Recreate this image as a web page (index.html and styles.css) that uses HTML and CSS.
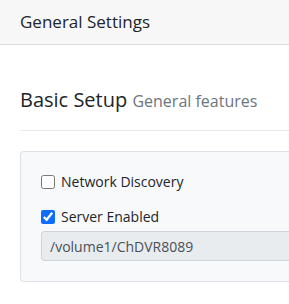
FILE: index.html
```html
<!DOCTYPE html>
<html lang="en">
<head>
  <meta charset="UTF-8" />
  <meta name="viewport" content="width=device-width, initial-scale=1.0" />
  <title>General Settings</title>
  <link rel="stylesheet" href="styles.css">
</head>
<body>
  <div class="page-header">General Settings</div>

  <div class="content">
    <h4 class="section-title">Basic Setup <small>General features</small></h4>
    <hr />

    <div class="card">
      <label class="check">
        <input type="checkbox" />
        <span>Network Discovery</span>
      </label>
      <label class="check">
        <input type="checkbox" checked />
        <span>Server Enabled</span>
      </label>
      <input type="text" class="path-input" value="/volume1/ChDVR8089" readonly />
    </div>
  </div>
</body>
</html>
```

FILE: styles.css
```css
:root {
  --text-color: #212529;
  --muted: #6c757d;
  --border-color: #dee2e6;
  --card-bg: #f8f9fa;
  --accent: #0d6efd;
}

body {
  margin: 0;
  font-family: 'Open Sans', 'Noto Sans', sans-serif;
  color: var(--text-color);
  background: #fff;
}

.page-header {
  background: #f7f7f7;
  border-bottom: 1px solid #dfdfdf;
  height: 44px;
  line-height: 43px;
  padding: 0 20px;
  font-size: 17px;
}

.content {
  padding: 0 0 0 20px;
}

.section-title {
  margin: 42px 0 0;
  font-size: 20px;
  font-weight: normal;
  line-height: 26px;
}

.section-title small {
  font-size: 16px;
  color: var(--muted);
}

hr {
  border: 0;
  border-top: 1px solid #e9ecef;
  margin: 16px 0 20px;
}

.card {
  background: var(--card-bg);
  border: 1px solid var(--border-color);
  border-right: 0;
  border-radius: 4px 0 0 4px;
  padding: 20px 0 20px 20px;
}

.check {
  display: flex;
  align-items: center;
  gap: 6px;
  font-size: 14px;
  margin-bottom: 16px;
}

.check input {
  margin: 0;
  width: 14px;
  height: 14px;
  accent-color: var(--accent);
}

.check + .check {
  margin-bottom: 5px;
}

.path-input {
  display: block;
  width: 100%;
  box-sizing: border-box;
  height: 30px;
  padding: 0 8px;
  font-family: inherit;
  font-size: 14px;
  color: #495057;
  background: #e9ecef;
  border: 1px solid #ced4da;
  border-right: 0;
  border-radius: 4px 0 0 4px;
}
```
